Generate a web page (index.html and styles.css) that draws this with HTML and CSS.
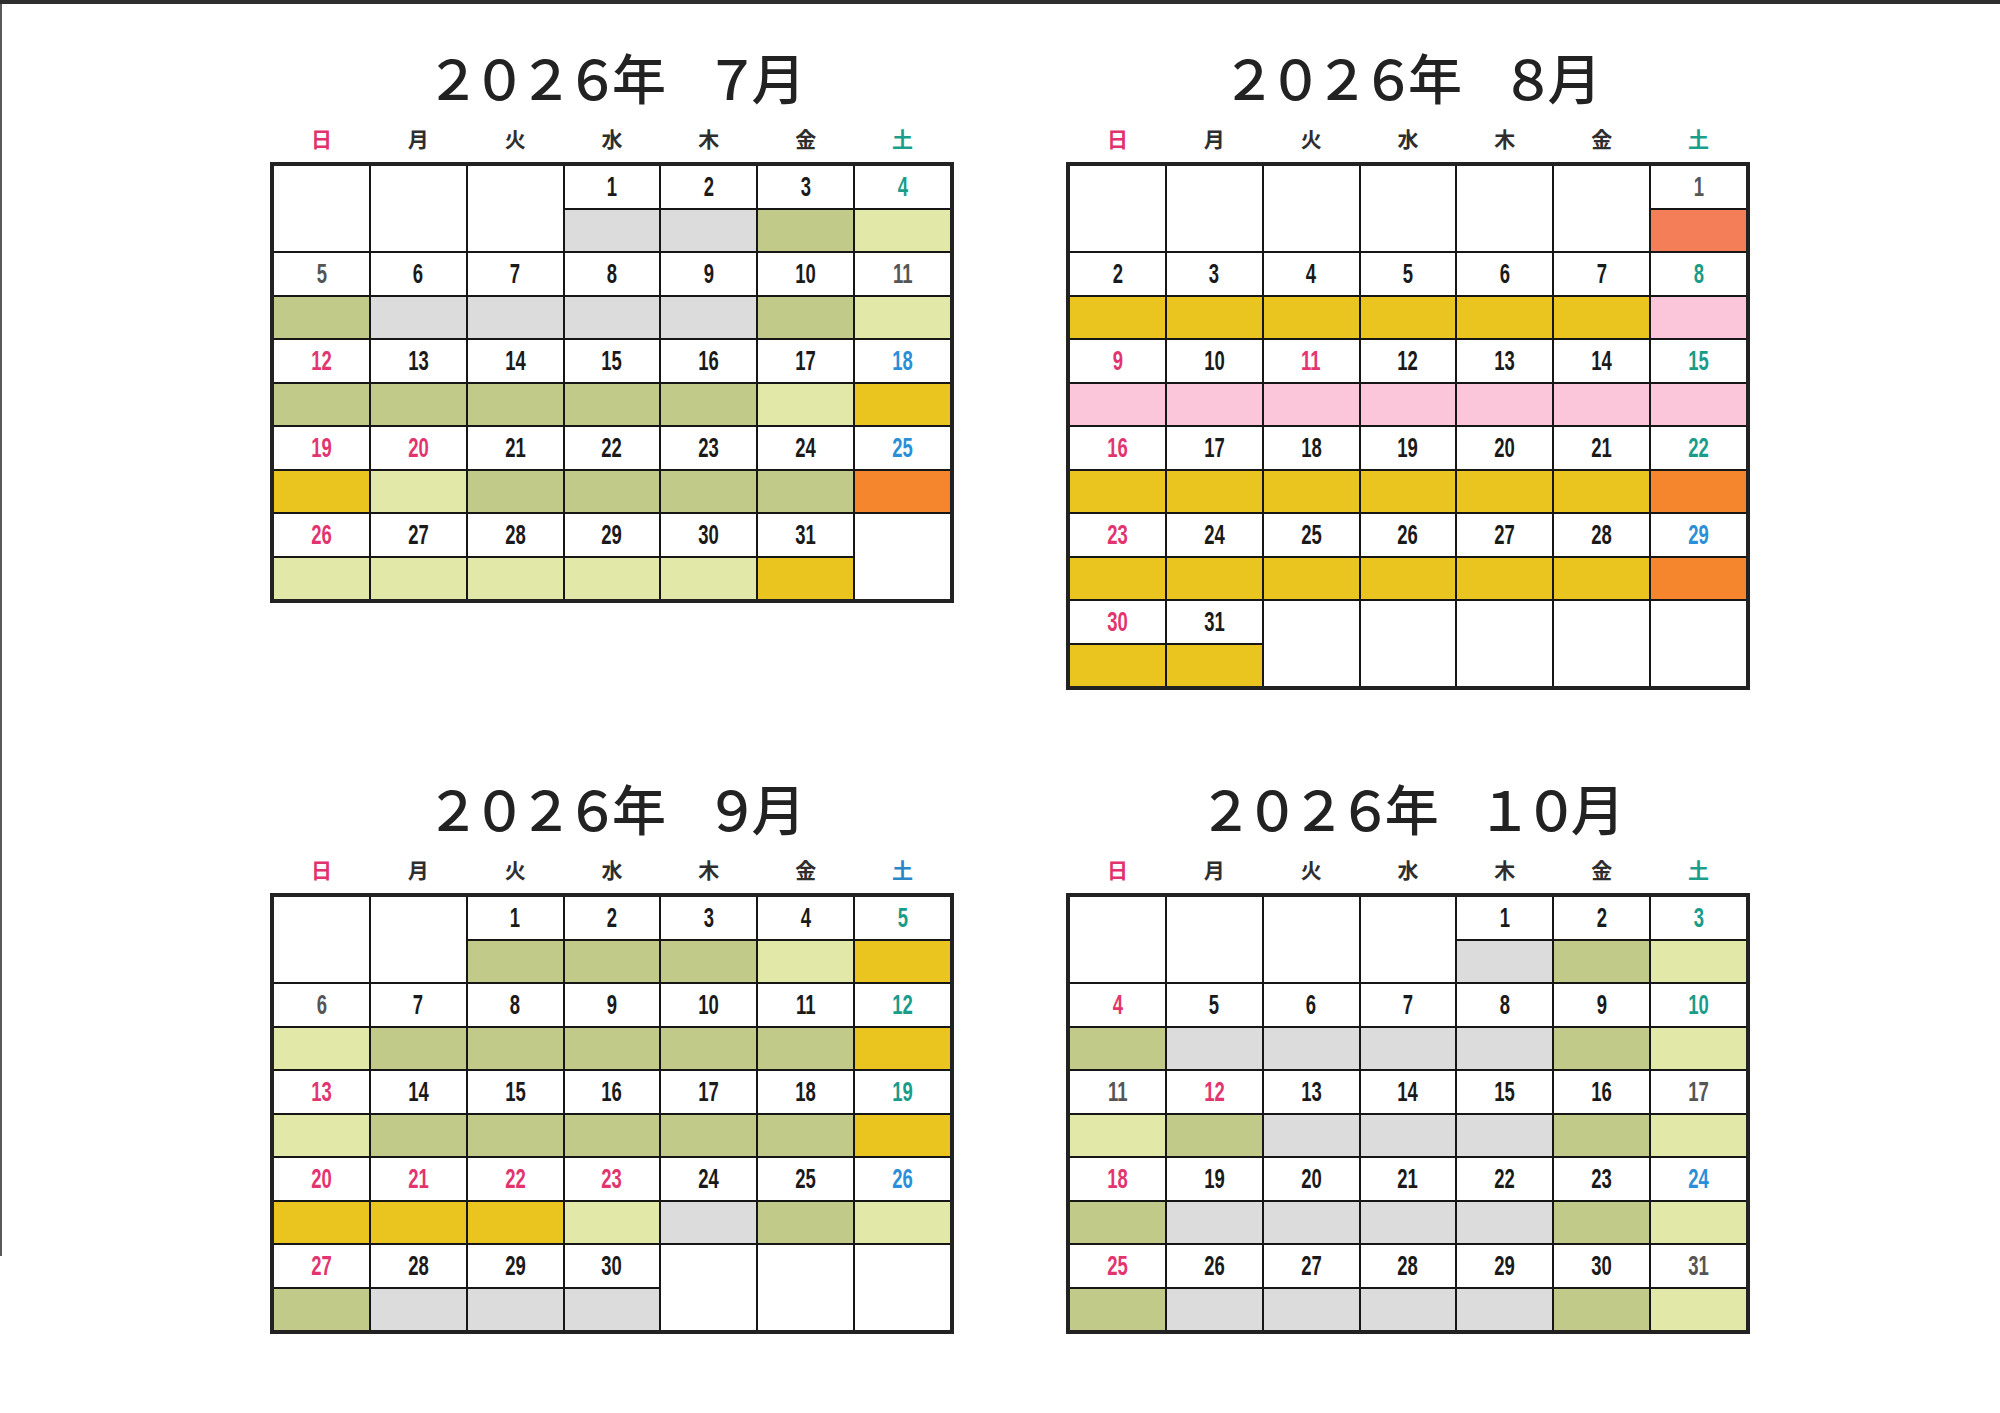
FILE: index.html
```html
<!DOCTYPE html>
<html lang="ja">
<head>
<meta charset="utf-8">
<title>2026年 カレンダー</title>
<link rel="stylesheet" href="styles.css">
</head>
<body>
<div class="sheet">
  <div class="months">

    <section class="month">
      <h2 class="title">２０２６年　７月</h2>
      <div class="dow"><span class="su">日</span><span>月</span><span>火</span><span>水</span><span>木</span><span>金</span><span class="sa">土</span></div>
      <div class="cal">
        <div class="d e"></div><div class="d e"></div><div class="d e"></div>
        <div class="d g"><div class="n"><span>1</span></div></div>
        <div class="d g"><div class="n"><span>2</span></div></div>
        <div class="d o"><div class="n"><span>3</span></div></div>
        <div class="d l sa"><div class="n"><span>4</span></div></div>

        <div class="d o gy"><div class="n"><span>5</span></div></div>
        <div class="d g"><div class="n"><span>6</span></div></div>
        <div class="d g"><div class="n"><span>7</span></div></div>
        <div class="d g"><div class="n"><span>8</span></div></div>
        <div class="d g"><div class="n"><span>9</span></div></div>
        <div class="d o"><div class="n"><span>10</span></div></div>
        <div class="d l gy"><div class="n"><span>11</span></div></div>

        <div class="d o su"><div class="n"><span>12</span></div></div>
        <div class="d o"><div class="n"><span>13</span></div></div>
        <div class="d o"><div class="n"><span>14</span></div></div>
        <div class="d o"><div class="n"><span>15</span></div></div>
        <div class="d o"><div class="n"><span>16</span></div></div>
        <div class="d l"><div class="n"><span>17</span></div></div>
        <div class="d y bl"><div class="n"><span>18</span></div></div>

        <div class="d y su"><div class="n"><span>19</span></div></div>
        <div class="d l su"><div class="n"><span>20</span></div></div>
        <div class="d o"><div class="n"><span>21</span></div></div>
        <div class="d o"><div class="n"><span>22</span></div></div>
        <div class="d o"><div class="n"><span>23</span></div></div>
        <div class="d o"><div class="n"><span>24</span></div></div>
        <div class="d r bl"><div class="n"><span>25</span></div></div>

        <div class="d l su"><div class="n"><span>26</span></div></div>
        <div class="d l"><div class="n"><span>27</span></div></div>
        <div class="d l"><div class="n"><span>28</span></div></div>
        <div class="d l"><div class="n"><span>29</span></div></div>
        <div class="d l"><div class="n"><span>30</span></div></div>
        <div class="d y"><div class="n"><span>31</span></div></div>
        <div class="d e"></div>
      </div>
    </section>

    <section class="month">
      <h2 class="title">２０２６年　８月</h2>
      <div class="dow"><span class="su">日</span><span>月</span><span>火</span><span>水</span><span>木</span><span>金</span><span class="sa">土</span></div>
      <div class="cal">
        <div class="d e"></div><div class="d e"></div><div class="d e"></div><div class="d e"></div><div class="d e"></div><div class="d e"></div>
        <div class="d s gy"><div class="n"><span>1</span></div></div>

        <div class="d y"><div class="n"><span>2</span></div></div>
        <div class="d y"><div class="n"><span>3</span></div></div>
        <div class="d y"><div class="n"><span>4</span></div></div>
        <div class="d y"><div class="n"><span>5</span></div></div>
        <div class="d y"><div class="n"><span>6</span></div></div>
        <div class="d y"><div class="n"><span>7</span></div></div>
        <div class="d p sa"><div class="n"><span>8</span></div></div>

        <div class="d p su"><div class="n"><span>9</span></div></div>
        <div class="d p"><div class="n"><span>10</span></div></div>
        <div class="d p su"><div class="n"><span>11</span></div></div>
        <div class="d p"><div class="n"><span>12</span></div></div>
        <div class="d p"><div class="n"><span>13</span></div></div>
        <div class="d p"><div class="n"><span>14</span></div></div>
        <div class="d p sa"><div class="n"><span>15</span></div></div>

        <div class="d y su"><div class="n"><span>16</span></div></div>
        <div class="d y"><div class="n"><span>17</span></div></div>
        <div class="d y"><div class="n"><span>18</span></div></div>
        <div class="d y"><div class="n"><span>19</span></div></div>
        <div class="d y"><div class="n"><span>20</span></div></div>
        <div class="d y"><div class="n"><span>21</span></div></div>
        <div class="d r sa"><div class="n"><span>22</span></div></div>

        <div class="d y su"><div class="n"><span>23</span></div></div>
        <div class="d y"><div class="n"><span>24</span></div></div>
        <div class="d y"><div class="n"><span>25</span></div></div>
        <div class="d y"><div class="n"><span>26</span></div></div>
        <div class="d y"><div class="n"><span>27</span></div></div>
        <div class="d y"><div class="n"><span>28</span></div></div>
        <div class="d r bl"><div class="n"><span>29</span></div></div>

        <div class="d y su"><div class="n"><span>30</span></div></div>
        <div class="d y"><div class="n"><span>31</span></div></div>
        <div class="d e"></div><div class="d e"></div><div class="d e"></div><div class="d e"></div><div class="d e"></div>
      </div>
    </section>

    <section class="month">
      <h2 class="title">２０２６年　９月</h2>
      <div class="dow"><span class="su">日</span><span>月</span><span>火</span><span>水</span><span>木</span><span>金</span><span class="sb">土</span></div>
      <div class="cal">
        <div class="d e"></div><div class="d e"></div>
        <div class="d o"><div class="n"><span>1</span></div></div>
        <div class="d o"><div class="n"><span>2</span></div></div>
        <div class="d o"><div class="n"><span>3</span></div></div>
        <div class="d l"><div class="n"><span>4</span></div></div>
        <div class="d y sa"><div class="n"><span>5</span></div></div>

        <div class="d l gy"><div class="n"><span>6</span></div></div>
        <div class="d o"><div class="n"><span>7</span></div></div>
        <div class="d o"><div class="n"><span>8</span></div></div>
        <div class="d o"><div class="n"><span>9</span></div></div>
        <div class="d o"><div class="n"><span>10</span></div></div>
        <div class="d o"><div class="n"><span>11</span></div></div>
        <div class="d y sa"><div class="n"><span>12</span></div></div>

        <div class="d l su"><div class="n"><span>13</span></div></div>
        <div class="d o"><div class="n"><span>14</span></div></div>
        <div class="d o"><div class="n"><span>15</span></div></div>
        <div class="d o"><div class="n"><span>16</span></div></div>
        <div class="d o"><div class="n"><span>17</span></div></div>
        <div class="d o"><div class="n"><span>18</span></div></div>
        <div class="d y sa"><div class="n"><span>19</span></div></div>

        <div class="d y su"><div class="n"><span>20</span></div></div>
        <div class="d y su"><div class="n"><span>21</span></div></div>
        <div class="d y su"><div class="n"><span>22</span></div></div>
        <div class="d l su"><div class="n"><span>23</span></div></div>
        <div class="d g"><div class="n"><span>24</span></div></div>
        <div class="d o"><div class="n"><span>25</span></div></div>
        <div class="d l bl"><div class="n"><span>26</span></div></div>

        <div class="d o su"><div class="n"><span>27</span></div></div>
        <div class="d g"><div class="n"><span>28</span></div></div>
        <div class="d g"><div class="n"><span>29</span></div></div>
        <div class="d g"><div class="n"><span>30</span></div></div>
        <div class="d e"></div><div class="d e"></div><div class="d e"></div>
      </div>
    </section>

    <section class="month">
      <h2 class="title">２０２６年　１０月</h2>
      <div class="dow"><span class="su">日</span><span>月</span><span>火</span><span>水</span><span>木</span><span>金</span><span class="sa">土</span></div>
      <div class="cal">
        <div class="d e"></div><div class="d e"></div><div class="d e"></div><div class="d e"></div>
        <div class="d g"><div class="n"><span>1</span></div></div>
        <div class="d o"><div class="n"><span>2</span></div></div>
        <div class="d l sa"><div class="n"><span>3</span></div></div>

        <div class="d o su"><div class="n"><span>4</span></div></div>
        <div class="d g"><div class="n"><span>5</span></div></div>
        <div class="d g"><div class="n"><span>6</span></div></div>
        <div class="d g"><div class="n"><span>7</span></div></div>
        <div class="d g"><div class="n"><span>8</span></div></div>
        <div class="d o"><div class="n"><span>9</span></div></div>
        <div class="d l sa"><div class="n"><span>10</span></div></div>

        <div class="d l gy"><div class="n"><span>11</span></div></div>
        <div class="d o su"><div class="n"><span>12</span></div></div>
        <div class="d g"><div class="n"><span>13</span></div></div>
        <div class="d g"><div class="n"><span>14</span></div></div>
        <div class="d g"><div class="n"><span>15</span></div></div>
        <div class="d o"><div class="n"><span>16</span></div></div>
        <div class="d l gy"><div class="n"><span>17</span></div></div>

        <div class="d o su"><div class="n"><span>18</span></div></div>
        <div class="d g"><div class="n"><span>19</span></div></div>
        <div class="d g"><div class="n"><span>20</span></div></div>
        <div class="d g"><div class="n"><span>21</span></div></div>
        <div class="d g"><div class="n"><span>22</span></div></div>
        <div class="d o"><div class="n"><span>23</span></div></div>
        <div class="d l bl"><div class="n"><span>24</span></div></div>

        <div class="d o su"><div class="n"><span>25</span></div></div>
        <div class="d g"><div class="n"><span>26</span></div></div>
        <div class="d g"><div class="n"><span>27</span></div></div>
        <div class="d g"><div class="n"><span>28</span></div></div>
        <div class="d g"><div class="n"><span>29</span></div></div>
        <div class="d o"><div class="n"><span>30</span></div></div>
        <div class="d l gy"><div class="n"><span>31</span></div></div>
      </div>
    </section>

  </div>
</div>
</body>
</html>
```

FILE: styles.css
```css
* { box-sizing: border-box; }

body {
  margin: 0;
  background: #fff;
  font-family: "Noto Sans CJK JP", "Noto Sans", sans-serif;
}

.sheet {
  position: relative;
  width: 2000px;
  min-height: 1413px;
  border-top: 4px solid #2e2e2e;
  padding: 43px 0 0 270px;
}

/* scanner edge on the left side of the page */
.sheet::before {
  content: "";
  position: absolute;
  left: 0;
  top: 0;
  width: 2px;
  height: 1252px;
  background: #5a5a5a;
}

.months {
  display: grid;
  grid-template-columns: 684px 684px;
  grid-template-rows: 731px auto;
  column-gap: 112px;
  align-items: start;
}

.title {
  margin: 0;
  height: 60px;
  line-height: 60px;
  text-align: center;
  font-size: 54px;
  font-weight: 500;
  letter-spacing: -7.5px;
  color: #222;
  white-space: nowrap;
}

.dow {
  display: grid;
  grid-template-columns: repeat(7, 1fr);
  column-gap: 2px;
  padding: 0 4px;
  margin: 16px 0 9px;
  height: 30px;
  line-height: 30px;
  font-size: 21px;
  font-weight: 700;
  text-align: center;
  color: #2e2e2e;
}
.dow .su { color: #e0336e; }
.dow .sa { color: #1b9e8c; }
.dow .sb { color: #2a86c8; }

.cal {
  display: grid;
  grid-template-columns: repeat(7, 1fr);
  grid-auto-rows: 85px;
  gap: 2px;
  background: #161616;
  border: 4px solid #222;
}

.d {
  display: flex;
  flex-direction: column;
  background: #fff;
}

.n {
  height: 44px;
  flex: none;
  background: #fff;
  border-bottom: 2px solid #161616;
  display: flex;
  align-items: center;
  justify-content: center;
  font-family: "Liberation Sans", Arial, sans-serif;
  font-size: 28px;
  font-weight: 700;
  line-height: 1;
  color: #1a1a1a;
}
.n span {
  display: inline-block;
  transform: scaleX(0.66);
}

/* band colours */
.e { background: #fff; }
.g { background: #dcdcdc; }
.o { background: #c2ca8a; }
.l { background: #e2e8a8; }
.y { background: #eac41f; }
.r { background: #f5862e; }
.s { background: #f47e58; }
.p { background: #fbc6d9; }

/* number colours */
.su .n { color: #e2356f; }
.sa .n { color: #1a9c8a; }
.bl .n { color: #2b8fd8; }
.gy .n { color: #555; }
```
